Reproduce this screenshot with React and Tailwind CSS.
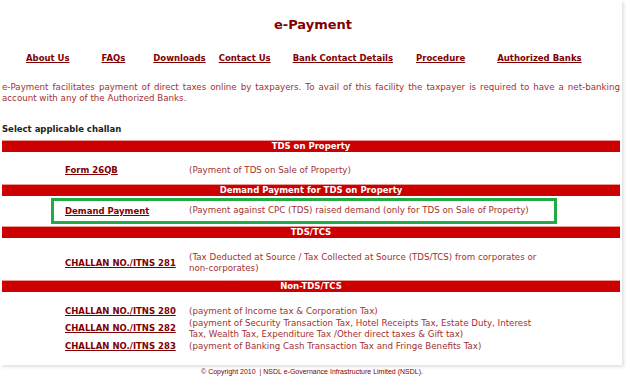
export default function App() {
  const nav = [
    ["About Us", "ml-[26px]"],
    ["FAQs", "ml-[32px]"],
    ["Downloads", "ml-[28px]"],
    ["Contact Us", "ml-[13px]"],
    ["Bank Contact Details", "ml-[22px]"],
    ["Procedure", "ml-[23px]"],
    ["Authorized Banks", "ml-[32px]"],
  ]

  const Bar = ({ children, className = "" }) => (
    <div className={`mx-[2px] h-[12px] bg-[#cc0000] border-t border-[#e99] text-white text-[8.5px] font-bold leading-[10px] text-center whitespace-nowrap ${className}`}>
      {children}
    </div>
  )

  const Row = ({ link, desc, className = "" }) => (
    <div className={`flex items-center ${className}`}>
      <a className="ml-[65px] w-[124px] shrink-0 font-bold text-[#800000] underline whitespace-nowrap">{link}</a>
      <div className="w-[360px] text-[8.7px] text-[#a33030] leading-[11px]">{desc}</div>
    </div>
  )

  return (
    <div className="w-[630px] h-[385px] bg-white overflow-hidden text-[8.5px] font-['DejaVu_Sans',Verdana,sans-serif]">
      <div className="w-[622px] h-[365px] bg-white shadow-[2px_2px_3px_rgba(0,0,0,0.12)] flex flex-col">
        <h1 className="mt-[16px] text-center text-[13px] font-bold text-[#800000] leading-[18px] pl-[4px]">e-Payment</h1>
        <nav className="mt-[18px] flex leading-[12px] whitespace-nowrap">
          {nav.map(([t, m]) => (
            <a key={t} className={`${m} font-bold text-[#800000] underline`}>{t}</a>
          ))}
        </nav>
        <p className="mt-[18px] mx-[2px] text-[8.7px] text-[#a33030] leading-[11px] text-justify [text-align-last:left]">
          e-Payment facilitates payment of direct taxes online by taxpayers. To avail of this facility the taxpayer is required to have a net-banking account with any of the Authorized Banks.
        </p>
        <div className="mt-[19px] ml-[2px] font-bold text-[#222] leading-[12px]">Select applicable challan</div>

        <Bar className="mt-[5px]">TDS on Property</Bar>
        <Row className="mt-[12px] h-[12px]" link="Form 26QB" desc="(Payment of TDS on Sale of Property)" />

        <Bar className="mt-[8px]">Demand Payment for TDS on Property</Bar>
        <div className="ml-[51px] w-[506px] h-[26px] mt-[2px] border-[3px] border-[#22aa44] flex items-center whitespace-nowrap">
          <a className="ml-[11px] w-[124px] shrink-0 font-bold text-[#800000] underline">Demand Payment</a>
          <div className="text-[8.7px] text-[#a33030]">(Payment against CPC (TDS) raised demand (only for TDS on Sale of Property)</div>
        </div>

        <Bar className="mt-[2px]">TDS/TCS</Bar>
        <Row
          className="mt-[14px]"
          link="CHALLAN NO./ITNS 281"
          desc="(Tax Deducted at Source / Tax Collected at Source (TDS/TCS) from corporates or non-corporates)"
        />

        <Bar className="mt-[6px]">Non-TDS/TCS</Bar>
        <Row className="mt-[13px]" link="CHALLAN NO./ITNS 280" desc="(payment of Income tax & Corporation Tax)" />
        <Row
          className="mt-0"
          link="CHALLAN NO./ITNS 282"
          desc="(payment of Security Transaction Tax, Hotel Receipts Tax, Estate Duty, Interest Tax, Wealth Tax, Expenditure Tax /Other direct taxes & Gift tax)"
        />
        <Row className="mt-0" link="CHALLAN NO./ITNS 283" desc="(payment of Banking Cash Transaction Tax and Fringe Benefits Tax)" />
      </div>
      <div className="mt-[2px] text-center text-[7px] text-[#800000] font-['Liberation_Sans',Arial,sans-serif] pr-[6px]">
        © Copyright 2010 &nbsp;| NSDL e-Governance Infrastructure Limited (NSDL).
      </div>
    </div>
  )
}
